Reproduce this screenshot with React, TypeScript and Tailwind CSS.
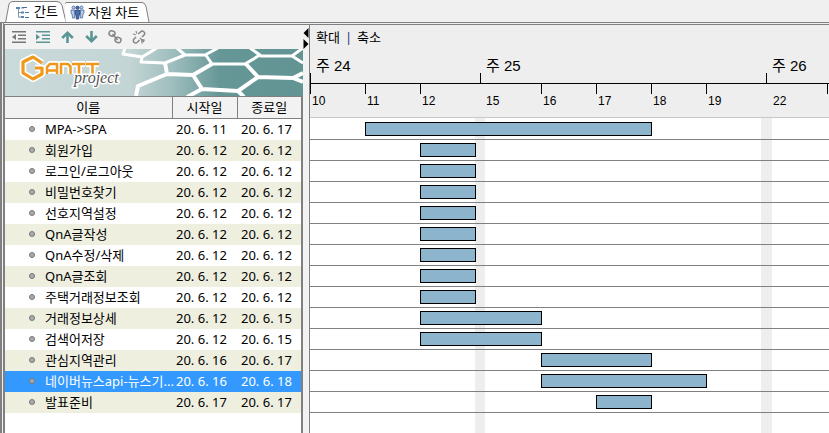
import React from 'react';

const UI = "font-['Noto_Sans','Noto_Sans_CJK_KR',sans-serif]";
const CHART = "font-['Liberation_Sans','Noto_Sans_CJK_KR',sans-serif]";
const DAYS = 'grid grid-cols-[55px_55px_55px_10px_56px_55px_55px_55px_55px_11px_55px_minmax(0,1fr)]';

const tasks = [
  { name: 'MPA->SPA', start: '20. 6. 11', end: '20. 6. 17', bar: 'col-start-2 col-end-8' },
  { name: '회원가입', start: '20. 6. 12', end: '20. 6. 12', bar: 'col-start-3 col-end-4' },
  { name: '로그인/로그아웃', start: '20. 6. 12', end: '20. 6. 12', bar: 'col-start-3 col-end-4' },
  { name: '비밀번호찾기', start: '20. 6. 12', end: '20. 6. 12', bar: 'col-start-3 col-end-4' },
  { name: '선호지역설정', start: '20. 6. 12', end: '20. 6. 12', bar: 'col-start-3 col-end-4' },
  { name: 'QnA글작성', start: '20. 6. 12', end: '20. 6. 12', bar: 'col-start-3 col-end-4' },
  { name: 'QnA수정/삭제', start: '20. 6. 12', end: '20. 6. 12', bar: 'col-start-3 col-end-4' },
  { name: 'QnA글조회', start: '20. 6. 12', end: '20. 6. 12', bar: 'col-start-3 col-end-4' },
  { name: '주택거래정보조회', start: '20. 6. 12', end: '20. 6. 12', bar: 'col-start-3 col-end-4' },
  { name: '거래정보상세', start: '20. 6. 12', end: '20. 6. 15', bar: 'col-start-3 col-end-6' },
  { name: '검색어저장', start: '20. 6. 12', end: '20. 6. 15', bar: 'col-start-3 col-end-6' },
  { name: '관심지역관리', start: '20. 6. 16', end: '20. 6. 17', bar: 'col-start-6 col-end-8' },
  { name: '네이버뉴스api-뉴스기...', start: '20. 6. 16', end: '20. 6. 18', bar: 'col-start-6 col-end-9', selected: true },
  { name: '발표준비', start: '20. 6. 17', end: '20. 6. 17', bar: 'col-start-7 col-end-8' },
];

// Mondays carry no tick of their own: the week tick above stands in the weekend gap.
const days = [
  { label: '10', tick: true, cell: 'col-start-1' },
  { label: '11', tick: true, cell: 'col-start-2' },
  { label: '12', tick: true, cell: 'col-start-3' },
  { label: '15', tick: false, cell: 'col-start-5' },
  { label: '16', tick: true, cell: 'col-start-6' },
  { label: '17', tick: true, cell: 'col-start-7' },
  { label: '18', tick: true, cell: 'col-start-8' },
  { label: '19', tick: true, cell: 'col-start-9' },
  { label: '22', tick: false, cell: 'col-start-11' },
  { label: '', tick: true, cell: 'col-start-12' },
];

function GanttIcon() {
  return (
    <svg width="13" height="13" viewBox="0 0 13 13" fill="none" aria-hidden="true">
      <path d="M2.500 3v8.500M2.500 6.500h3M2.500 11h3M5 2h3" stroke="#8296ac" />
      <path d="M0 1h4v2H0zM5 5.500h3v2H5zM5 10h3v2H5z" fill="#5b83b4" />
      <path d="M6 1.500h5M9 6.500h4M9 11.500h4" stroke="#44719f" />
    </svg>
  );
}

function PeopleIcon() {
  return (
    <svg width="15" height="15" viewBox="0 0 15 15" aria-hidden="true">
      <g fill="#b9cbe6" stroke="#4a67a0" strokeWidth=".8">
        <circle cx="3.500" cy="2.500" r="1.500" />
        <path d="M1 5h4v4L4.500 13h-2L2 9 1 8z" />
        <circle cx="11.500" cy="2.500" r="1.500" />
        <path d="M10 5h4v3l-1 1-.5 4h-2L10 9z" />
      </g>
      <g fill="#4a6eaa" stroke="#26457f" strokeWidth=".8">
        <circle cx="7.500" cy="2.800" r="1.700" />
        <path d="M5 5.500h5v4l-1 .5-.3 4H6.300L6 10l-1-.5z" />
      </g>
    </svg>
  );
}

function Indent({ inward }: { inward?: boolean }) {
  return (
    <svg width="14" height="12" viewBox="0 0 14 12" fill={inward ? '#5b9696' : '#777'} aria-hidden="true">
      <path d="M0 0h14v1.500H0zM6 3.500h8V5H6zM6 7h8v1.500H6zM0 10.500h14V12H0z" />
      <path d={inward ? 'M0 3l4 3-4 3z' : 'M4 3L0 6l4 3z'} />
    </svg>
  );
}

function Arrow({ down }: { down?: boolean }) {
  return (
    <svg width="13" height="12" viewBox="0 0 13 12" fill="none" stroke="#5b9696" strokeWidth="2.600" aria-hidden="true">
      <path d={down ? 'M6.500 0v10M1.200 5l5.300 5.200L11.800 5' : 'M6.500 12V2M1.200 7l5.300-5.200L11.800 7'} />
    </svg>
  );
}

function Chain({ broken }: { broken?: boolean }) {
  return (
    <svg width="14" height="14" viewBox="0 0 14 14" fill="none" stroke="#858585" strokeWidth="1.500" aria-hidden="true">
      {broken ? (
        <>
          <path d="M6 4l2.500-2a2.300 2.300 0 0 1 3.500 3L10 7M4 7L2 9a2.300 2.300 0 0 0 3.300 3.300L7.500 10" />
          <path d="M4 1l.7 2.500M1 4l2.700.7M10 9.500l3 .7M9.500 10.500l.8 3M8 8l4 4" strokeWidth="1.100" />
        </>
      ) : (
        <>
          <rect x="1" y="1" width="6" height="5" rx="2.500" transform="rotate(20 4 3.500)" />
          <rect x="7" y="7.500" width="6" height="5" rx="2.500" transform="rotate(20 10 10)" />
          <path d="M4.500 4l5 6" />
        </>
      )}
    </svg>
  );
}

function Banner() {
  const letters = 'M42 25v-7l3-3h7v10M42 21.500h10M56 25V15h7l2.500 2.500V25M67 15h13M74 15v10M81 15h13M87.500 15v10';
  const hexG = 'M37 14L28 8l-10 5v11l10 6 9-5v-6h-7';
  return (
    <svg className="block h-[47px] w-full" viewBox="0 0 298 47" preserveAspectRatio="xMinYMin slice" role="img" aria-label="GanttProject">
      <defs>
        <linearGradient id="sky">
          <stop offset="0" stopColor="#cbdada" />
          <stop offset=".42" stopColor="#c3d5d5" />
          <stop offset=".56" stopColor="#a0bebe" />
          <stop offset=".72" stopColor="#669797" />
          <stop offset="1" stopColor="#629494" />
        </linearGradient>
      </defs>
      <rect width="298" height="47" fill="url(#sky)" />
      <g fill="none" stroke="#fff" strokeLinejoin="round">
        <path strokeWidth="3" d="M120-1l-2 6 19 3-1 5 24 1 20-8-8-7M137 8l15-9M180 6h20l13-7M200 5l7 10h33l15-9-10-7M255 7h32l11-8M287 7l11 7" />
        <path strokeWidth="4" d="M160 14l2 11 26 1 19-11M162 25l-29 12-2 10M188 26l9 14 36 2 20-14-13-14M253 28l35 1 10-5M288 29l10 4M197 40l-15 8M233 42l6 6" />
      </g>
      <g fill="none" strokeLinejoin="round">
        <path d={hexG} stroke="#fff" strokeWidth="6.500" />
        <path d={letters} stroke="#fff" strokeWidth="6" />
        <path d={hexG} stroke="#ef981b" strokeWidth="3.200" />
        <path d={letters} stroke="#ef981b" strokeWidth="2.500" />
      </g>
      <text x="69" y="34" fontFamily="Liberation Serif, serif" fontStyle="italic" fontSize="16" fill="#555" stroke="#fff" strokeWidth="3" paintOrder="stroke">project</text>
    </svg>
  );
}

function Bullet() {
  return <span className="size-[6px] shrink-0 rounded-full border border-[#777] bg-[#aaa]" />;
}

const tools = [
  { label: '내어쓰기', icon: <Indent /> },
  { label: '들여쓰기', icon: <Indent inward /> },
  { label: '위로', icon: <Arrow /> },
  { label: '아래로', icon: <Arrow down /> },
  { label: '연결', icon: <Chain /> },
  { label: '연결 해제', icon: <Chain broken /> },
];

function Tabs() {
  return (
    <div role="tablist" className="flex h-[22px] pl-[5px]">
      <button role="tab" aria-selected="true" className="relative flex w-[60px] items-center gap-[5px] pt-[2px] pl-[11px]">
        <svg className="absolute top-0 left-0 -z-10" width="62" height="23" viewBox="0 0 62 23" fill="#fff" stroke="#808080" aria-hidden="true">
          <path d="M.5 23L4 4Q5 1.500 8 1.500h44q4 0 5 4L61 22" />
        </svg>
        <GanttIcon />
        <span>간트</span>
      </button>
      <button role="tab" aria-selected="false" className="relative flex w-[86px] items-center gap-[3px] pt-[3px] pl-[5px]">
        <svg className="absolute top-0 left-0 -z-10" width="86" height="23" viewBox="0 0 86 23" fill="#fff" stroke="#808080" aria-hidden="true">
          <path d="M0 22L-1 5l2-2.500h76q3 0 4 4l3 15.500" />
        </svg>
        <PeopleIcon />
        <span>자원 차트</span>
      </button>
    </div>
  );
}

function TaskTable() {
  return (
    <div className="flex grow flex-col border-r-2 border-[#808080] bg-white">
      <table className="w-full table-fixed border-collapse">
        <colgroup>
          <col />
          <col className="w-[65px]" />
          <col className="w-[64px]" />
        </colgroup>
        <thead>
          <tr className="h-[22px] bg-[#f2f2f2]">
            <th className="border-y border-r border-[#808080] p-0 font-normal">이름</th>
            <th className="border-y border-r border-[#808080] p-0 font-normal">시작일</th>
            <th className="border-y border-[#808080] p-0 font-normal">종료일</th>
          </tr>
        </thead>
        <tbody>
          {tasks.map((t, i) => (
            <tr key={t.name} className={`h-[21px] ${t.selected ? 'bg-[#3399ff] text-white' : i % 2 ? 'bg-[#efefe0]' : 'bg-white'}`}>
              <td className="p-0">
                <div className="flex items-center gap-[10px] pl-[24px] leading-5 whitespace-nowrap">
                  <Bullet />
                  {t.name}
                </div>
              </td>
              <td className="p-0 pl-1 leading-5 whitespace-nowrap">{t.start}</td>
              <td className="p-0 pl-1 leading-5 whitespace-nowrap">{t.end}</td>
            </tr>
          ))}
        </tbody>
      </table>
    </div>
  );
}

function Timeline() {
  return (
    <div className="bg-[#eeeeee]">
      <div className="grid h-[34px] grid-cols-[170px_286px_minmax(0,1fr)] border-b border-black text-[15px]">
        {['주 24', '주 25', '주 26'].map((w) => (
          <div key={w} className="flex gap-[5px] overflow-hidden">
            <span className="h-[10px] w-px self-end bg-black" />
            <span className="leading-8 whitespace-nowrap">{w}</span>
          </div>
        ))}
      </div>
      <div className={`${DAYS} h-[34px] border-b border-[#c8c8c8] text-xs`}>
        {days.map((d) => (
          <div key={d.label} className={`${d.cell} flex items-start`}>
            {d.tick && <span className="h-[10px] w-px shrink-0 bg-black" />}
            <span className="pt-2 pl-px leading-[18px]">{d.label}</span>
          </div>
        ))}
      </div>
    </div>
  );
}

function Chart() {
  return (
    <div className="relative flex grow flex-col bg-white">
      <div className={`${DAYS} absolute inset-0`} aria-hidden="true">
        <span className="col-start-4 bg-[#eeeeee]" />
        <span className="col-start-10 bg-[#eeeeee]" />
      </div>
      <div className="relative pt-px">
        {tasks.map((t) => (
          <div key={t.name} className={`${DAYS} h-[21px] border-b border-[#808080] pt-[3px]`}>
            <span className={`${t.bar} -mr-px h-[14px] border border-black bg-[#8cb4cd]`} />
          </div>
        ))}
      </div>
    </div>
  );
}

export default function App() {
  return (
    <div className={`${UI} isolate flex min-h-screen flex-col overflow-hidden bg-[#f0f0f0] text-[13px] text-black`}>
      <Tabs />
      <div className="flex grow border-t border-[#808080]">
        <div className="w-[4px] border-r border-l-2 border-[#808080]" />
        <main className="mt-px flex min-w-0 grow border-t border-[#808080]">
          <section className="flex w-[299px] shrink-0 flex-col border-l border-[#808080]">
            <div className="flex h-[24px] items-center bg-[#f2f2f2] pl-[2px]">
              {tools.map((t) => (
                <button key={t.label} aria-label={t.label} className="flex w-6 justify-center">{t.icon}</button>
              ))}
            </div>
            <Banner />
            <TaskTable />
          </section>
          <div className="w-[6px] shrink-0 bg-[#f2f2f2]">
            <svg width="6" height="24" viewBox="0 0 6 24" aria-hidden="true">
              <path d="M5.500 3v10L.5 8zM.5 14v10l5-5z" />
            </svg>
          </div>
          <section className={`${CHART} flex min-w-0 grow flex-col border-l border-[#808080]`}>
            <div className={`${UI} flex h-[25px] items-center gap-[5px] bg-[#eeeeee] pl-[6px]`}>
              <button>확대</button>
              <span className="text-[#33337a]">|</span>
              <button>축소</button>
            </div>
            <Timeline />
            <Chart />
          </section>
        </main>
      </div>
    </div>
  );
}
